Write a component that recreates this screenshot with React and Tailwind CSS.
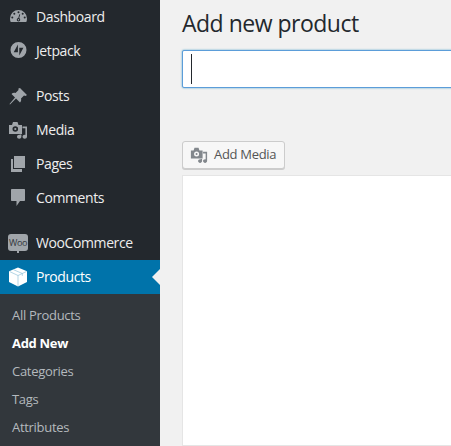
const iconColor = "#a0a5aa";

function DashboardIcon() {
  return (
    <svg width="20" height="20" viewBox="0 0 20 20" fill={iconColor}>
      <path
        fillRule="evenodd"
        d="M2 11.500A8.500 8.500 0 0 1 19 11.500C19 13 18.700 14.200 18.300 15H2.700C2.300 14.200 2 13 2 11.500zM10.500 4.200a1 1 0 1 0 0 2 1 1 0 0 0 0-2zM6.300 5.700a1 1 0 1 0 0 2 1 1 0 0 0 0-2zM14.700 5.700a1 1 0 1 0 0 2 1 1 0 0 0 0-2zM4.300 9.500a1 1 0 1 0 0 2 1 1 0 0 0 0-2zM16.700 9.500a1 1 0 1 0 0 2 1 1 0 0 0 0-2zM12.200 7.500l-1 3.600c.6.300 1 .9 1 1.600 0 .9-.7 1.700-1.700 1.700s-1.700-.8-1.700-1.700c0-.9.700-1.600 1.500-1.700l1-3.700z"
      />
      <circle cx="10.500" cy="12.700" r=".7" />
    </svg>
  );
}

function JetpackIcon() {
  return (
    <svg width="20" height="20" viewBox="0 0 20 20" fill={iconColor}>
      <path
        fillRule="evenodd"
        d="M10.500 1a8 8 0 1 0 0 16 8 8 0 0 0 0-16zM9.900 3.400v7.900H5.700zM11.300 6.700h4.100l-4.100 7.900z"
      />
    </svg>
  );
}

function PostsIcon() {
  return (
    <svg width="20" height="20" viewBox="0 0 20 20" fill={iconColor}>
      <path d="M12 2l7 7-1.500 1-1.500-.5-3 3c.5 1.500 0 3-1 4l-4-4-6 6-.5-.5 5.500-6.500-3.500-3.500c1-1 2.500-1.500 4-1l3-3-.1-1.500z" />
    </svg>
  );
}

function MediaIcon({ color = iconColor, size = 20 }) {
  return (
    <svg width={size} height={size} viewBox="0 0 20 20" fill={color}>
      <path
        fillRule="evenodd"
        d="M1 5h3l1-3h4.500l1 3H14v9H1zM7.300 6.200a2.800 2.800 0 1 0 0 5.600 2.800 2.800 0 0 0 0-5.600z"
      />
      <circle cx="7.300" cy="9" r="1.100" />
      <path d="M14.500 6.500H19v10.300c0 1.200-1 2-2.200 2s-2.300-.8-2.300-2 1-2 2.300-2c.2 0 .4 0 .6.100V8.200h-2.900z" />
      <path d="M11.800 15v-.500h1.600v2.300c0 1.200-1 2-2.200 2s-2.200-.8-2.200-2 1-2 2.200-2z" />
    </svg>
  );
}

function PagesIcon() {
  return (
    <svg width="20" height="20" viewBox="0 0 20 20" fill={iconColor}>
      <path d="M6 2h11v12H6z" />
      <path d="M3 5h2v10h9v3H3z" />
    </svg>
  );
}

function CommentsIcon() {
  return (
    <svg width="20" height="20" viewBox="0 0 20 20" fill={iconColor}>
      <path d="M4 1h12c.6 0 1 .4 1 1v10c0 .6-.4 1-1 1h-4l-3.500 5v-5H4c-.6 0-1-.4-1-1V2c0-.6.4-1 1-1z" />
    </svg>
  );
}

function WooIcon() {
  return (
    <div className="relative -mt-[2px] flex h-[17px] w-[20px] items-center justify-center rounded-[3px] bg-[#a0a5aa]">
      <span className="text-[9px] leading-none tracking-[-0.3px] text-[#32373c]">Woo</span>
      <div className="absolute -bottom-[2px] left-[9px] h-[2px] w-[2px] bg-[#a0a5aa]" />
    </div>
  );
}

function ProductsIcon() {
  return (
    <svg width="20" height="20" viewBox="0 0 20 20" fill="#fff">
      <path d="M10 .5l9 3.800v10.600L10 19.500 1 14.900V4.300z" />
      <path d="M1.500 4.500L10 8.500l8.500-4M10 8.500V19M5.500 2.700l8.800 3.800v2.400" stroke="#7fb9d4" strokeWidth=".6" fill="none" />
    </svg>
  );
}

const menuGroups = [
  [
    { label: "Dashboard", icon: <DashboardIcon /> },
    { label: "Jetpack", icon: <JetpackIcon /> },
  ],
  [
    { label: "Posts", icon: <PostsIcon /> },
    { label: "Media", icon: <MediaIcon /> },
    { label: "Pages", icon: <PagesIcon /> },
    { label: "Comments", icon: <CommentsIcon /> },
  ],
];

const subItems = ["All Products", "Add New", "Categories", "Tags", "Attributes"];

function MenuItem({ label, icon, active }) {
  return (
    <div
      className={`relative flex h-[34px] items-center pl-[8px] text-[14px] tracking-[-0.4px] ${
        active ? "bg-[#0073aa] text-white" : "text-[#eeeeee]"
      }`}
    >
      <span className="flex w-[20px] justify-center">{icon}</span>
      <span className="ml-[8px] pb-[2px]">{label}</span>
      {active && (
        <span className="absolute right-0 top-1/2 h-0 w-0 -translate-y-1/2 border-y-[8px] border-r-[8px] border-y-transparent border-r-[#f1f1f1]" />
      )}
    </div>
  );
}

export default function App() {
  return (
    <div className="flex h-[446px] w-[451px] overflow-hidden bg-[#f1f1f1] font-['Open_Sans','Noto_Sans',sans-serif]">
      <aside className="flex w-[160px] shrink-0 flex-col bg-[#23282d]">
        {menuGroups.map((group, i) => (
          <div key={i} className="mb-[11px]">
            {group.map((item) => (
              <MenuItem key={item.label} {...item} />
            ))}
          </div>
        ))}
        <MenuItem label="WooCommerce" icon={<WooIcon />} />
        <MenuItem label="Products" icon={<ProductsIcon />} active />
        <ul className="flex-1 bg-[#32373c] pt-[8px]">
          {subItems.map((name) => (
            <li
              key={name}
              className={`flex h-[28px] items-center pl-[12px] text-[13px] tracking-[-0.3px] ${
                name === "Add New" ? "font-bold text-white" : "text-[#b4b9be]"
              }`}
            >
              {name}
            </li>
          ))}
        </ul>
      </aside>

      <main className="min-w-0 flex-1 pl-[22px]">
        <div className="w-[600px]">
          <h1 className="pt-[7px] text-[23px] leading-[32px] tracking-[-0.5px] text-[#23282d]">Add new product</h1>
          <div className="mt-[11px] flex h-[38px] items-center rounded-[2px] border border-[#5b9dd9] bg-white pl-[8px] shadow-[0_0_2px_rgba(30,140,190,0.8)]">
            <span className="h-[30px] w-px bg-[#23282d]" />
          </div>
          <button className="mt-[53px] flex h-[28px] w-[103px] items-center rounded-[3px] border border-[#cccccc] bg-[#f7f7f7] pl-[7px] text-[13px] tracking-[-0.3px] text-[#555555] shadow-[0_1px_0_#cccccc]">
            <MediaIcon color="#82878c" size={18} />
            <span className="ml-[6px]">Add Media</span>
          </button>
          <div className="mt-[6px] h-[271px] border border-[#e5e5e5] bg-white" />
        </div>
      </main>
    </div>
  );
}
